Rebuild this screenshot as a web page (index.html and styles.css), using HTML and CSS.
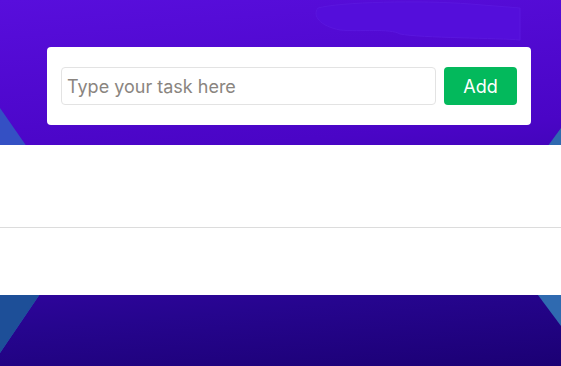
FILE: index.html
```html
<!DOCTYPE html>
<html lang="en">
<head>
<meta charset="utf-8">
<title>Todo</title>
<link rel="stylesheet" href="styles.css">
</head>
<body>
<div class="page">
  <svg class="deco" width="561" height="366" viewBox="0 0 561 366" aria-hidden="true">
    <polygon points="0,108 84,229 0,353" fill="#3450c4"/>
    <polygon points="0,250 84,229 0,353" fill="#1d4f98"/>
    <polygon points="561,128 488,228 561,326" fill="#2f6ab0"/>
    <path d="M318,8 C340,2 420,0 470,4 L520,8 L520,40 C500,38 420,38 400,34 C390,28 360,32 340,30 C320,26 312,16 318,8 Z" fill="#540edb" stroke="#5a16de" stroke-width="1"/>
  </svg>
  <main class="app">
    <form class="card">
      <input class="task-input" type="text" placeholder="Type your task here">
      <button class="add-btn" type="button">Add</button>
    </form>
    <ul class="list">
      <li class="item"></li>
      <li class="item last"></li>
    </ul>
  </main>
</div>
</body>
</html>
```
FILE: styles.css
```css
html, body {
  margin: 0;
  padding: 0;
}
body {
  width: 561px;
  height: 366px;
  overflow: hidden;
  font-family: "Inter", "Noto Sans", sans-serif;
}
.page {
  position: relative;
  width: 561px;
  height: 366px;
  background: linear-gradient(175deg, #580edc 0%, #4a05c6 40%, #26058e 80%, #1b0074 100%);
}
.deco {
  position: absolute;
  left: 0;
  top: 0;
}
.app {
  position: relative;
  padding-top: 47px;
}
.card {
  margin: 0 30px 0 47px;
  background: #fff;
  border-radius: 4px;
  padding: 20px 14px;
  display: flex;
  gap: 8px;
}
.task-input {
  flex: 1;
  height: 38px;
  box-sizing: border-box;
  border: 1px solid #e3e3e3;
  border-radius: 4px;
  padding: 0 5px;
  font-family: inherit;
  font-size: 18px;
  color: #333;
  outline: none;
}
.task-input::placeholder {
  color: #8a8580;
}
.add-btn {
  width: 73px;
  height: 38px;
  border: none;
  border-radius: 4px;
  background: #03b95c;
  color: #fff;
  font-family: inherit;
  font-size: 18px;
}
.list {
  list-style: none;
  margin: 20px 0 0;
  padding: 0;
  background: #fff;
}
.item {
  height: 82px;
  border-bottom: 1px solid #dcdcdc;
}
.item.last {
  height: 67px;
  border-bottom: none;
}
```
